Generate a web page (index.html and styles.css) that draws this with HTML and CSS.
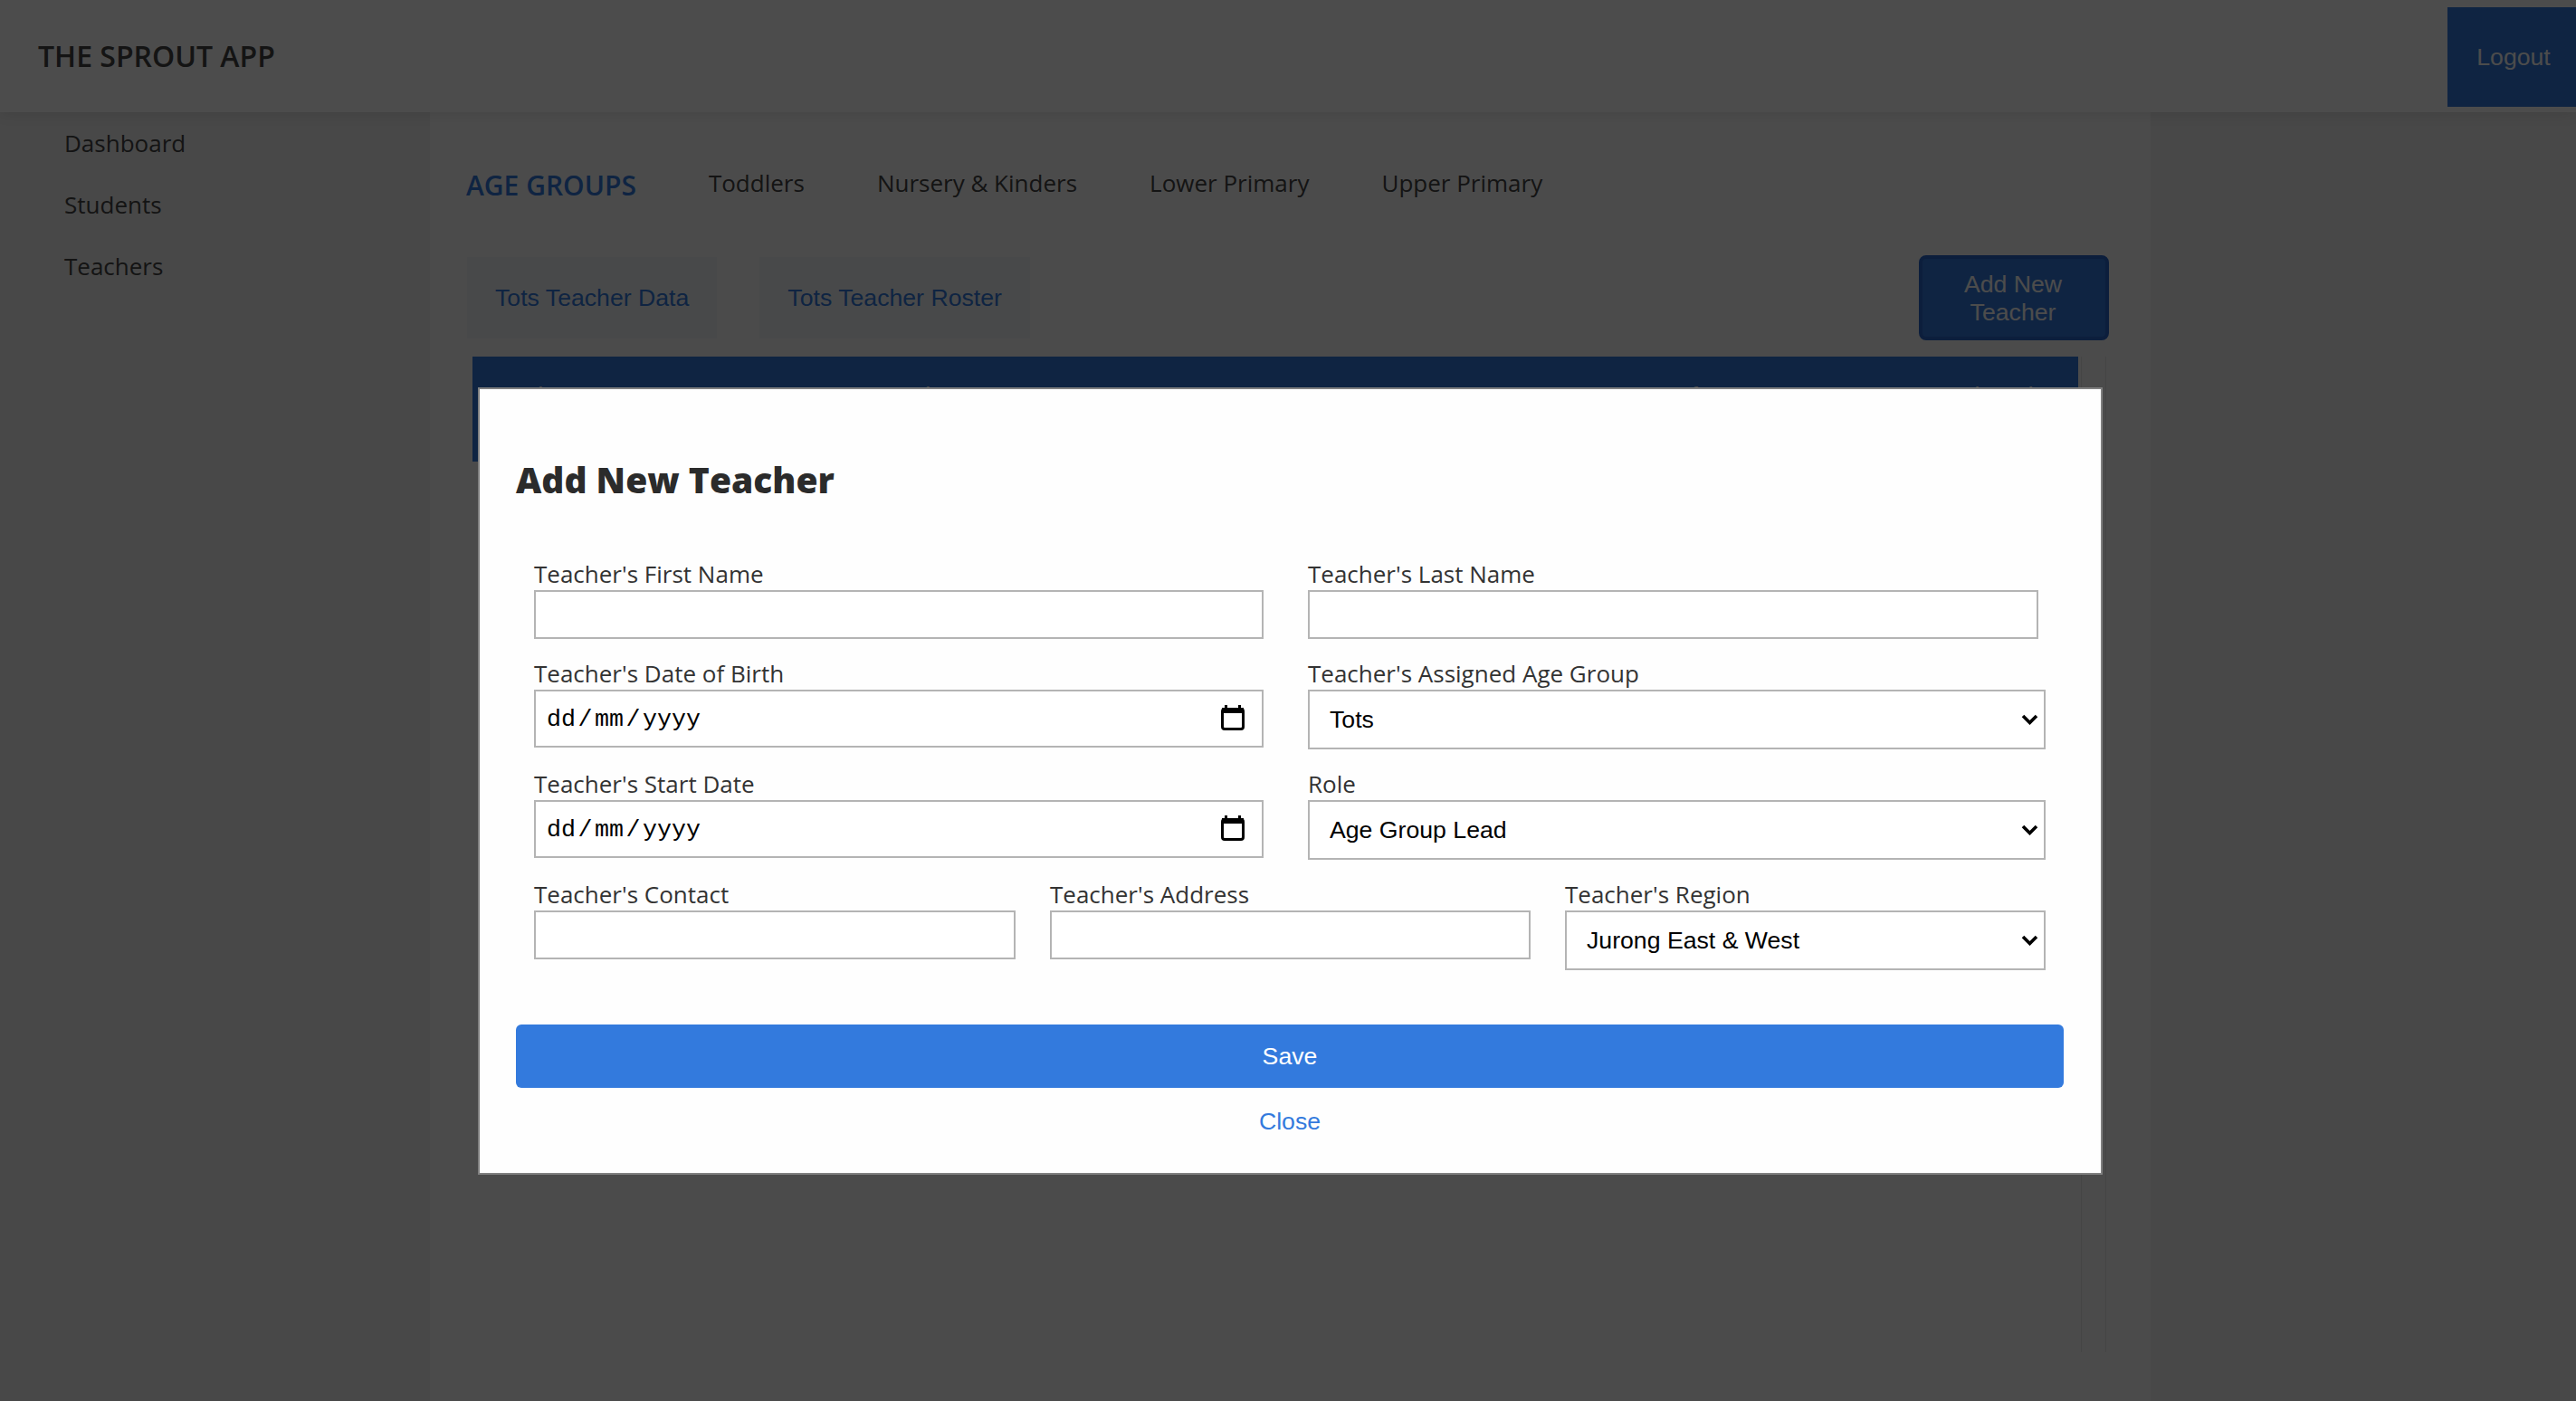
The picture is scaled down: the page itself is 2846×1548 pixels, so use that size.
FILE: index.html
```html
<!DOCTYPE html>
<html lang="en-GB">
<head>
<meta charset="utf-8">
<title>The Sprout App</title>
<link rel="stylesheet" href="styles.css">
</head>
<body>
<header class="topbar">
  <div class="brand">THE SPROUT APP</div>
  <button class="logout" type="button">Logout</button>
</header>
<div class="shell">
  <nav class="sidebar">
    <a class="side-link">Dashboard</a>
    <a class="side-link">Students</a>
    <a class="side-link">Teachers</a>
  </nav>
  <main class="main">
    <div class="groups">
      <span class="groups-title">AGE GROUPS</span>
      <a class="group-link">Toddlers</a>
      <a class="group-link">Nursery &amp; Kinders</a>
      <a class="group-link">Lower Primary</a>
      <a class="group-link">Upper Primary</a>
    </div>
    <div class="toolbar">
      <button class="tab" type="button">Tots Teacher Data</button>
      <button class="tab" type="button">Tots Teacher Roster</button>
      <button class="add" type="button">Add New Teacher</button>
    </div>
    <div class="table-wrap">
      <div class="table-area">
        <div class="table-head">
          <span class="th th-1">Teacher's</span>
          <span class="th th-2">Age</span>
          <span class="th th-3">Teacher's</span>
          <span class="th th-4">Start</span>
          <span class="th th-5">Years of</span>
          <span class="th th-6">Assigned</span>
        </div>
      </div>
      <div class="scrolltrack"></div>
    </div>
  </main>
</div>

<div class="overlay">
  <section class="modal">
    <h2 class="modal-title">Add New Teacher</h2>
    <form class="form">
      <div class="row row-two">
        <label class="field"><span class="label">Teacher's First Name</span><input class="control" type="text"></label>
        <label class="field field-short"><span class="label">Teacher's Last Name</span><input class="control" type="text"></label>
      </div>
      <div class="row row-two">
        <div class="field"><span class="label">Teacher's Date of Birth</span>
          <div class="control date">
            <span>dd</span><span>/</span><span>mm</span><span>/</span><span>yyyy</span>
            <svg class="cal" viewBox="0 0 26 28" width="26" height="28"><rect x="1.5" y="4.5" width="23" height="22" rx="2.5" fill="none" stroke="#000" stroke-width="3"/><rect x="1" y="3" width="24" height="6" fill="#000"/><rect x="4" y="0" width="3" height="4" fill="#000"/><rect x="19" y="0" width="3" height="4" fill="#000"/></svg>
          </div>
        </div>
        <label class="field field-wide"><span class="label">Teacher's Assigned Age Group</span>
          <span class="pick-box"><select class="control pick"><option>Tots</option></select><svg class="chev" viewBox="0 0 19 12" width="19" height="12"><path d="M2 2l7.5 7.5L17 2" fill="none" stroke="#000" stroke-width="3.6"/></svg></span>
        </label>
      </div>
      <div class="row row-two">
        <div class="field"><span class="label">Teacher's Start Date</span>
          <div class="control date">
            <span>dd</span><span>/</span><span>mm</span><span>/</span><span>yyyy</span>
            <svg class="cal" viewBox="0 0 26 28" width="26" height="28"><rect x="1.5" y="4.5" width="23" height="22" rx="2.5" fill="none" stroke="#000" stroke-width="3"/><rect x="1" y="3" width="24" height="6" fill="#000"/><rect x="4" y="0" width="3" height="4" fill="#000"/><rect x="19" y="0" width="3" height="4" fill="#000"/></svg>
          </div>
        </div>
        <label class="field field-wide"><span class="label">Role</span>
          <span class="pick-box"><select class="control pick"><option>Age Group Lead</option></select><svg class="chev" viewBox="0 0 19 12" width="19" height="12"><path d="M2 2l7.5 7.5L17 2" fill="none" stroke="#000" stroke-width="3.6"/></svg></span>
        </label>
      </div>
      <div class="row row-three">
        <label class="field"><span class="label">Teacher's Contact</span><input class="control" type="text"></label>
        <label class="field"><span class="label">Teacher's Address</span><input class="control" type="text"></label>
        <label class="field"><span class="label">Teacher's Region</span>
          <span class="pick-box"><select class="control pick"><option>Jurong East &amp; West</option></select><svg class="chev" viewBox="0 0 19 12" width="19" height="12"><path d="M2 2l7.5 7.5L17 2" fill="none" stroke="#000" stroke-width="3.6"/></svg></span>
        </label>
      </div>
      <button class="save" type="button">Save</button>
      <a class="close">Close</a>
    </form>
  </section>
</div>
</body>
</html>
```

FILE: styles.css
```css
* { box-sizing: border-box; }
html, body { margin: 0; height: 100%; overflow: hidden; }
body {
  background: #f0f0f0;
  font-family: "Open Sans", "Liberation Sans", sans-serif;
  color: #444;
}
button, select { font-family: "Liberation Sans", Arial, sans-serif; font-size: 26.67px; }

.topbar {
  height: 124px;
  background: #fff;
  padding: 8px 0 6px 42px;
  display: flex;
  justify-content: space-between;
  align-items: stretch;
  box-shadow: 0 2px 14px rgba(0, 0, 0, .1);
  position: relative;
}
.brand { font-size: 32px; font-weight: 600; align-self: center; margin-top: -4px; }
.logout {
  width: 142px;
  border: 0;
  background: #337add;
  color: #fff;
  padding: 0 0 0 4px;
}

.shell { display: flex; height: 1424px; }
.sidebar {
  width: 475px;
  padding: 12px 0 0 71px;
  display: flex;
  flex-direction: column;
  gap: 24px;
}
.side-link { font-size: 26px; line-height: 44px; }

.main {
  width: 1901px;
  background: #fcfcfc;
  padding: 0 46px 0 40px;
}
.groups { display: flex; align-items: center; height: 160px; gap: 80px; }
.groups-title { font-size: 30px; font-weight: 600; color: #337add; }
.group-link { font-size: 26px; margin-top: -4px; }

.toolbar { display: flex; align-items: center; height: 94px; margin-top: -2px; }
.tab {
  height: 90px;
  padding: 0 31px;
  margin: 0 46px 0 1px;
  border: 0;
  background: #f2f5f9;
  color: #337add;
}
.add {
  width: 210px;
  height: 94px;
  margin-left: auto;
  border: 4px solid #2864c8;
  border-radius: 8px;
  background: #337add;
  color: #fff;
  line-height: 31px;
  padding: 2px 31px 0 29px;
}

.table-wrap { display: flex; height: 1100px; margin: 18px 0 0 7px; }
.table-area { width: 1774px; margin-right: 3px; }
.table-head {
  height: 116px;
  background: #337add;
  color: #fff;
  font-family: "Liberation Sans", sans-serif;
  font-size: 26.67px;
  position: relative;
}
.th { position: absolute; top: 28px; }
.th-1 { left: 16px; }
.th-2 { left: 318px; }
.th-3 { left: 444px; }
.th-4 { left: 1126px; }
.th-5 { left: 1257px; }
.th-6 { left: 1615px; }
.scrolltrack {
  width: 28px;
  border-left: 1px solid #e6e6e6;
  border-right: 1px solid #e6e6e6;
}

.overlay {
  position: fixed;
  inset: 0;
  background: rgba(0, 0, 0, .7);
}
.modal {
  position: absolute;
  left: 528px;
  top: 428px;
  width: 1795px;
  height: 870px;
  background: #fefefe;
  border: 2px solid #808080;
  padding: 0 41px 0 40px;
  color: #333;
}
.modal-title {
  margin: 0;
  padding-top: 72px;
  height: 145px;
  font-size: 39px;
  line-height: 56px;
  font-weight: 800;
  color: #2b2b2b;
}
.form { display: flex; flex-direction: column; padding-top: 41px; }
.row { display: grid; margin: 0 20px; }
.row-two { grid-template-columns: 806px 815px; column-gap: 49px; }
.row-three { grid-template-columns: 532px 531px 531px; column-gap: 38px; }
.field { display: flex; flex-direction: column; align-items: stretch; }
.field-short { margin-right: 8px; }
.row + .row { margin-top: 20px; }
.label { font-size: 26px; line-height: 36px; }
.control {
  border: 2px solid #b4b4b4;
  background: #fff;
  border-radius: 0;
  height: 54px;
  padding: 0 12px;
  margin: 0;
  color: #000;
}
.date {
  height: 64px;
  display: flex;
  align-items: center;
  gap: 2.5px;
  padding-top: 2px;
  padding-right: 19px;
  font-family: "Liberation Mono", monospace;
  font-size: 26.67px;
}
.cal { margin-left: auto; margin-bottom: 4px; }
.pick-box { position: relative; display: flex; }
.pick {
  appearance: none;
  width: 100%;
  height: 66px;
  padding: 0 22px;
}
.chev { position: absolute; right: 8px; top: 27px; pointer-events: none; }
.save {
  height: 70px;
  margin-top: 60px;
  border: 0;
  border-radius: 6px;
  background: #337add;
  color: #fff;
}
.close {
  margin-top: 22px;
  text-align: center;
  font-family: "Liberation Sans", sans-serif;
  font-size: 26.67px;
  line-height: 31px;
  color: #337add;
}
```
